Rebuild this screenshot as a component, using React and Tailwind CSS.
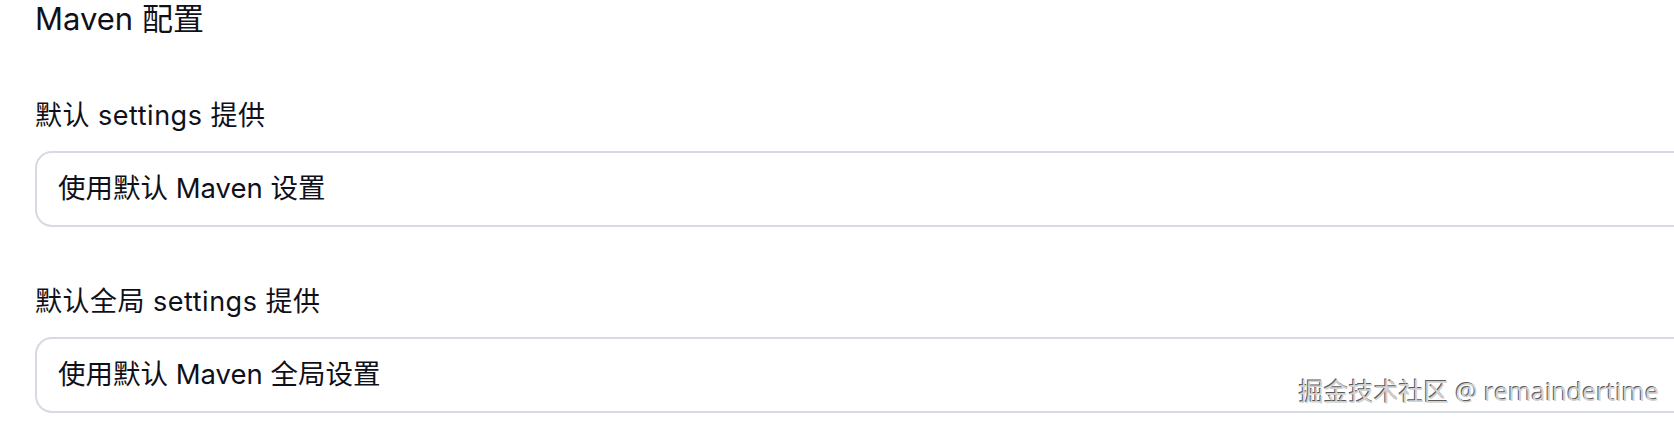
const fields = [
    { label: '默认 settings 提供', value: '使用默认 Maven 设置' },
    { label: '默认全局 settings 提供', value: '使用默认 Maven 全局设置' },
];

const Field = ({ label, value }) => (
    <div className="flex flex-col">
        <label className="h-[38px] flex items-center text-[27px] tracking-[0.5px] leading-none">{label}</label>
        <div className="mt-[17px] w-[1700px] h-[76px] flex items-center px-[21px] border-2 border-[#d5dae3] rounded-[17px] bg-white text-[27.5px]">
            {value}
        </div>
    </div>
);

export default function App() {
    return (
        <div
            className="relative w-[1674px] h-[422px] overflow-hidden bg-white text-[#10101a]"
            style={{ fontFamily: 'Inter, "Noto Sans CJK SC", sans-serif' }}
        >
            <div className="pl-[35px] flex flex-col">
                {/* Section title */}
                <h2 className="h-[37px] flex items-center text-[31px] leading-none">Maven 配置</h2>

                <div className="mt-[59px] flex flex-col gap-[55px]">
                    {fields.map((f) => (
                        <Field key={f.label} label={f.label} value={f.value} />
                    ))}
                </div>
            </div>

            {/* Watermark */}
            <div
                className="absolute right-[15px] top-[379px] text-[25px] leading-none text-[#d2d2d2] [text-shadow:-1px_-1px_0_#5a5a5a,1px_1px_0_#ffffff]"
                style={{ fontFamily: '"Open Sans", "Noto Sans CJK SC", sans-serif' }}
            >
                掘金技术社区 @ remaindertime
            </div>
        </div>
    );
}
